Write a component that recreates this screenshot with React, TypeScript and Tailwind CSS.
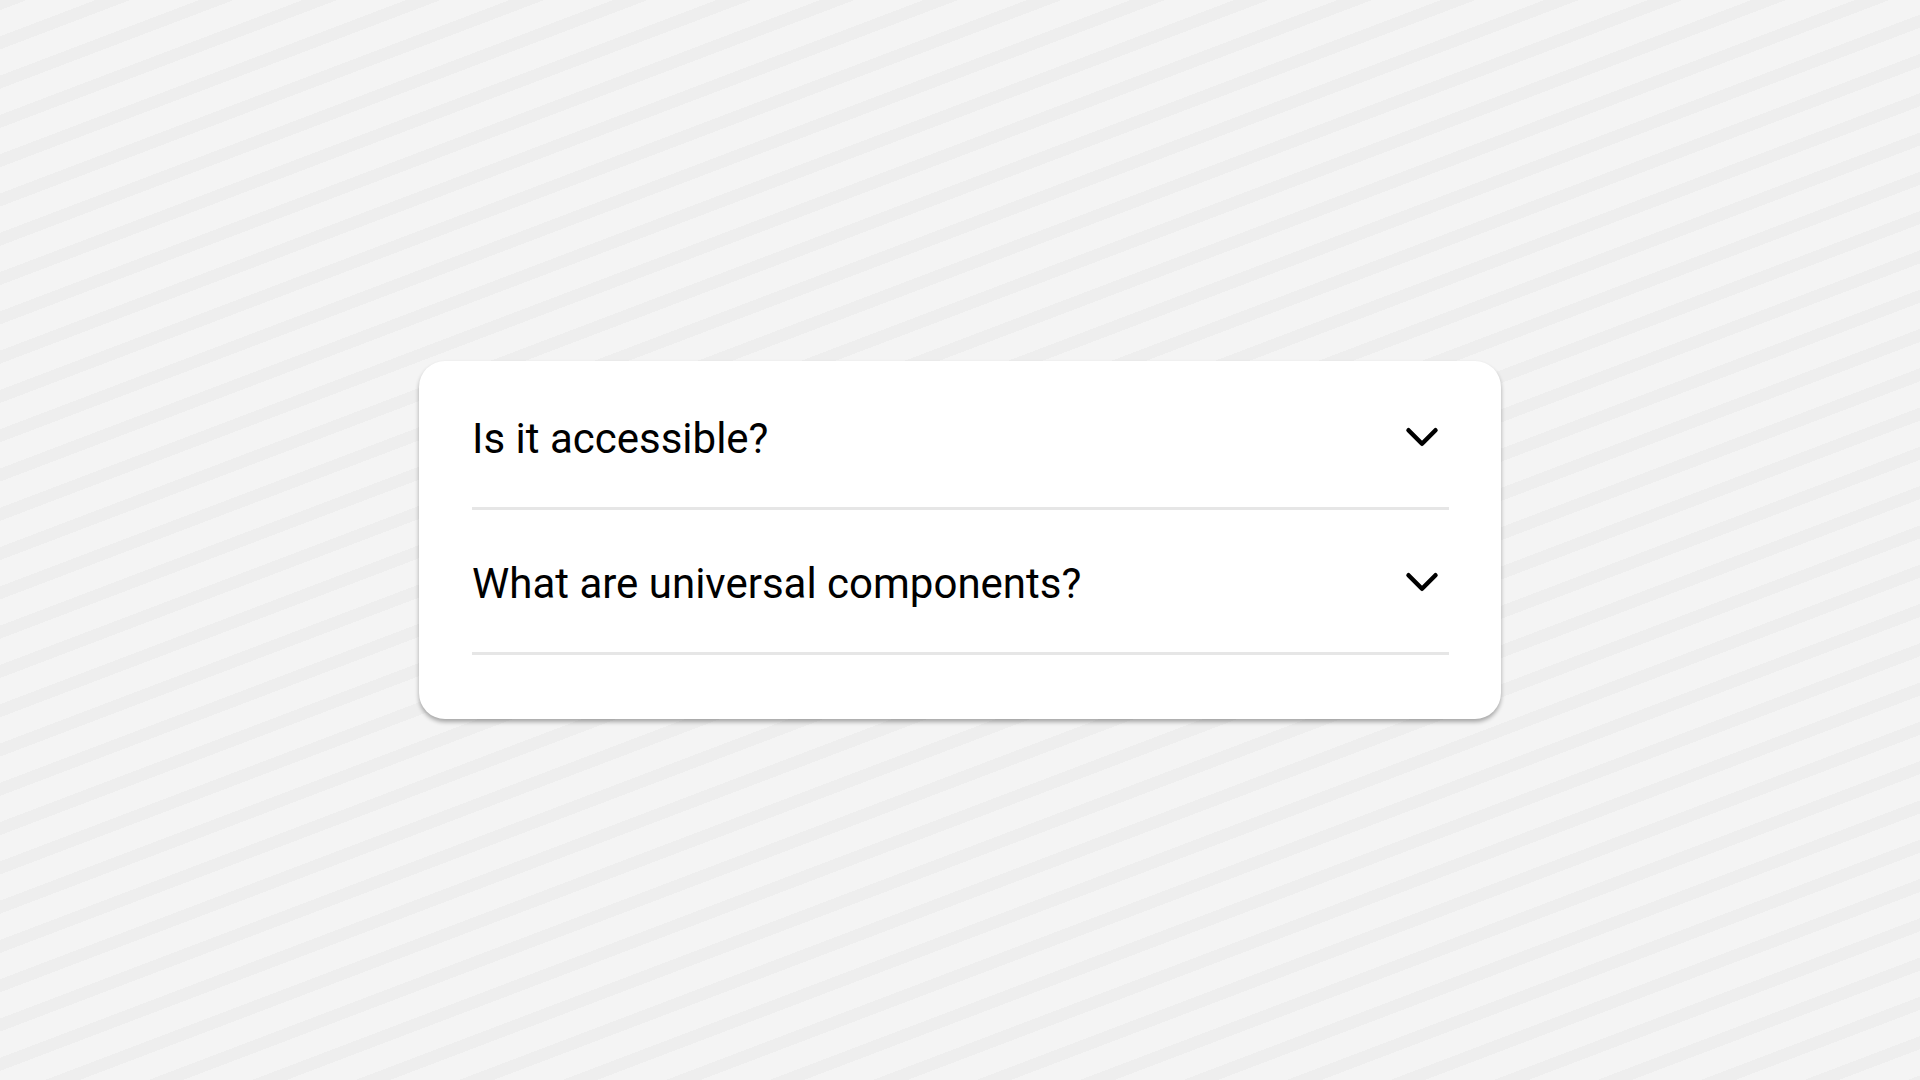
import { useState } from "react";

const items = [
  {
    question: "Is it accessible?",
    answer: "Yes. It adheres to the WAI-ARIA design pattern.",
  },
  {
    question: "What are universal components?",
    answer: "Components that render natively on every platform.",
  },
];

function Chevron({ open }: { open: boolean }) {
  return (
    <svg
      aria-hidden="true"
      viewBox="0 0 24 24"
      className={open ? "size-[54px] rotate-180" : "size-[54px]"}
      fill="none"
      stroke="currentColor"
      strokeWidth="2"
      strokeLinecap="round"
      strokeLinejoin="round"
    >
      <path d="m6 9 6 6 6-6" />
    </svg>
  );
}

export default function App() {
  const [open, setOpen] = useState<number | null>(null);

  return (
    <main className="flex min-h-screen items-center justify-center bg-[#f4f4f4] bg-[repeating-linear-gradient(159.21deg,#eeeeee_0px_9.5px,#f4f4f4_9.5px_33.97px,#eeeeee_33.97px_36.73px)] px-6 font-['Roboto',sans-serif] text-black">
      <section className="w-full max-w-[1082px] rounded-[26px] bg-white pt-1 pr-[52px] pb-16 pl-[53px] shadow-[0_3px_4px_rgba(0,0,0,0.32)]">
        {items.map((item, i) => (
          <div key={item.question} className="border-b-3 border-[#e6e6e6]">
            <h3>
              <button
                type="button"
                aria-expanded={open === i}
                aria-controls={`answer-${i}`}
                onClick={() => setOpen(open === i ? null : i)}
                className="flex w-full items-start justify-between pt-[45px] pb-[39px] text-left text-[42px] leading-[58px]"
              >
                {item.question}
                <Chevron open={open === i} />
              </button>
            </h3>
            <p
              id={`answer-${i}`}
              hidden={open !== i}
              className="pb-10 text-[32px]"
            >
              {item.answer}
            </p>
          </div>
        ))}
      </section>
    </main>
  );
}
